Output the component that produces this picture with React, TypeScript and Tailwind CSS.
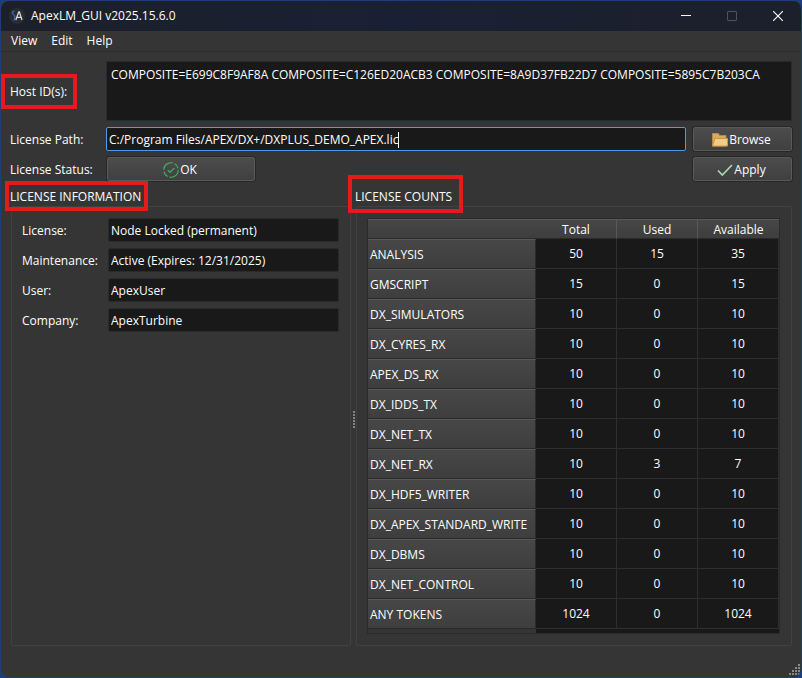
import { ReactNode } from "react";

const hostIds =
  "COMPOSITE=E699C8F9AF8A COMPOSITE=C126ED20ACB3 COMPOSITE=8A9D37FB22D7 COMPOSITE=5895C7B203CA";

const info = [
  { id: "license", label: "License:", value: "Node Locked (permanent)" },
  { id: "maintenance", label: "Maintenance:", value: "Active (Expires: 12/31/2025)" },
  { id: "user", label: "User:", value: "ApexUser" },
  { id: "company", label: "Company:", value: "ApexTurbine" },
];

const counts: [string, number, number, number][] = [
  ["ANALYSIS", 50, 15, 35],
  ["GMSCRIPT", 15, 0, 15],
  ["DX_SIMULATORS", 10, 0, 10],
  ["DX_CYRES_RX", 10, 0, 10],
  ["APEX_DS_RX", 10, 0, 10],
  ["DX_IDDS_TX", 10, 0, 10],
  ["DX_NET_TX", 10, 0, 10],
  ["DX_NET_RX", 10, 3, 7],
  ["DX_HDF5_WRITER", 10, 0, 10],
  ["DX_APEX_STANDARD_WRITE", 10, 0, 10],
  ["DX_DBMS", 10, 0, 10],
  ["DX_NET_CONTROL", 10, 0, 10],
  ["ANY TOKENS", 1024, 0, 1024],
];

function PushButton({ children, className = "" }: { children: ReactNode; className?: string }) {
  return (
    <button
      type="button"
      className={`flex h-6 items-center justify-center gap-px rounded-xs border border-[#5a5a5a] bg-linear-to-b from-[#4c4c4c] to-[#404040] pt-0.5 pr-0.5 outline outline-[#272727] ${className}`}
    >
      {children}
    </button>
  );
}

function Highlight({ className }: { className: string }) {
  return <span aria-hidden="true" className={`pointer-events-none absolute z-10 border-4 border-[#e51b1b] ${className}`} />;
}

function TitleBar() {
  return (
    <header className="flex h-[30px] items-center bg-linear-to-r from-[#1c202b] via-[#1a2033] to-[#1c202b]">
      <svg className="ml-2 size-4" viewBox="0 0 16 16" fill="none" aria-hidden="true">
        <circle cx="8" cy="8" r="8" fill="#2b2c30" />
        <path d="M5.500 3.500C3 3 2.500 5.500 4.500 6.500S6 10 5 12.500" stroke="#3a6bb0" strokeWidth="1.200" />
        <path d="M6.800 12 9.800 4h.6L13 12M8 9.300h4" stroke="#d4d8e0" strokeWidth="1.300" />
      </svg>
      <h1 className="ml-[6px] flex-1">ApexLM_GUI v2025.15.6.0</h1>
      <button type="button" aria-label="Minimize" className="grid h-full w-[46px] place-items-center">
        <svg width="10" height="10" aria-hidden="true"><path d="M0 4.500h10" stroke="#fff" /></svg>
      </button>
      <button type="button" aria-label="Maximize" disabled className="grid h-full w-[46px] place-items-center">
        <svg width="10" height="10" fill="none" aria-hidden="true"><rect x=".5" y=".5" width="9" height="9" rx=".5" stroke="#50535c" /></svg>
      </button>
      <button type="button" aria-label="Close" className="grid h-full w-[46px] place-items-center">
        <svg width="10" height="10" aria-hidden="true"><path d="m0 0 10 10M10 0 0 10" stroke="#fff" strokeWidth="1.100" /></svg>
      </button>
    </header>
  );
}

function HostForm() {
  return (
    <form className="grid grid-cols-[96px_1fr_99px] items-center gap-y-1.5">
      <label htmlFor="host" className="relative justify-self-start pt-0.5">
        Host ID(s):
        <Highlight className="-top-2 -left-[9px] h-[35px] w-[76px]" />
      </label>
      <textarea
        id="host"
        readOnly
        value={hostIds}
        className="col-span-2 block h-[60px] resize-none border border-[#2a2a2a] bg-[#191919] px-1 pt-[5px] outline-none"
      />
      <label htmlFor="path" className="pt-0.5">License Path:</label>
      <div className="mr-[7px] flex h-6 items-center rounded-xs border border-[#4a9be8] bg-[#191919] pt-0.5 pl-0.5">
        <input
          id="path"
          defaultValue="C:/Program Files/APEX/DX+/DXPLUS_DEMO_APEX.lic"
          className="field-sizing-content outline-none"
        />
        <span aria-hidden="true" className="h-4 w-px bg-white" />
      </div>
      <PushButton>
        <svg className="size-4" viewBox="0 0 16 16" aria-hidden="true">
          <path d="M.5 14V1.500h6l1 2H14V14z" fill="#d9a95c" stroke="#b98a3f" />
          <path d="M.5 14 3 6.500h12.500v7.500z" fill="#f3cb84" stroke="#c6984e" />
        </svg>
        Browse
      </PushButton>
      <span className="pt-0.5">License Status:</span>
      <PushButton className="ml-px w-[148px]">
        <svg className="size-4" viewBox="0 0 16 16" fill="none" stroke="#41b665" aria-hidden="true">
          <circle cx="8" cy="8" r="7.300" strokeWidth="1.100" strokeDasharray="13 2 6 2" />
          <path d="m4.800 8.200 2.200 2.200 4.200-4.300" strokeWidth="1.200" />
        </svg>
        OK
      </PushButton>
      <PushButton>
        <svg className="size-4" viewBox="0 0 16 16" fill="none" aria-hidden="true">
          <path d="m1 8.500 4.300 4.500L15 3" stroke="#a5dbb1" strokeWidth="1.700" />
        </svg>
        Apply
      </PushButton>
    </form>
  );
}

function Group({ title, highlight, className, children }: { title: string; highlight: string; className: string; children: ReactNode }) {
  return (
    <section className={`flex min-w-0 flex-col ${className}`}>
      <h2 className="relative self-start pt-[7px] leading-[18px]">
        {title}
        <Highlight className={highlight} />
      </h2>
      <div className="ml-px flex flex-1 flex-col rounded-xs border border-[#414141] py-[11px] pr-[11px] pl-2.5">{children}</div>
    </section>
  );
}

function CountsTable() {
  return (
    <div className="flex flex-1 flex-col border border-[#2a2a2a]">
      <table className="w-full table-fixed border-separate border-spacing-0">
        <colgroup>
          <col className="w-[168px]" />
          <col />
          <col />
          <col />
        </colgroup>
        <thead>
          <tr className="h-5">
            <td className="border-t border-b border-t-[#585858] border-b-[#2a2a2a] bg-linear-to-b from-[#474747] to-[#3e3e3e] p-0" />
            {["Total", "Used", "Available"].map((h) => (
              <th
                key={h}
                scope="col"
                className="border-t border-r border-b border-t-[#585858] border-r-[#585858] border-b-[#2a2a2a] bg-linear-to-b from-[#474747] to-[#3e3e3e] p-0 pt-0.5 font-normal last:border-r-0"
              >
                {h}
              </th>
            ))}
          </tr>
        </thead>
        <tbody>
          {counts.map(([name, ...values]) => (
            <tr key={name} className="h-[30px]">
              <th
                scope="row"
                className="border-t border-r border-b border-t-[#585858] border-r-[#2a2a2a] border-b-[#2a2a2a] bg-linear-to-b from-[#474747] to-[#3e3e3e] p-0 pt-0.5 pl-0.5 text-left font-normal"
              >
                {name}
              </th>
              {values.map((v, i) => (
                <td key={i} className="border-r border-b border-[#2e2e2e] bg-[#191919] p-0 text-center">
                  {v}
                </td>
              ))}
            </tr>
          ))}
        </tbody>
      </table>
      <div className="ml-[168px] min-h-1 flex-1 bg-[#191919]" />
    </div>
  );
}

export default function App() {
  return (
    <div className="flex min-h-screen flex-col bg-[#1c3f7c] p-px font-['Open_Sans','Segoe_UI',sans-serif] text-[12px] leading-4 text-white">
      <div className="relative flex flex-1 flex-col overflow-hidden rounded-lg bg-[#353535]">
        <TitleBar />
        <nav className="flex h-[21px] items-center gap-3.5 border-b border-[#2b2b2b] px-2.5">
          <button type="button">View</button>
          <button type="button">Edit</button>
          <button type="button">Help</button>
        </nav>
        <main className="flex flex-1 flex-col px-[9px] pt-[9px] pb-[31px]">
          <HostForm />
          <div className="flex flex-1">
            <Group title="LICENSE INFORMATION" highlight="top-0 -left-[5px] h-[30px] w-[143px]" className="flex-[341]">
              <div className="grid grid-cols-[86px_1fr] items-center gap-y-1.5">
                {info.map((f) => (
                  <div key={f.id} className="contents">
                    <label htmlFor={f.id} className="pt-0.5">{f.label}</label>
                    <input
                      id={f.id}
                      readOnly
                      value={f.value}
                      className="h-6 w-full min-w-0 rounded-xs border border-[#2a2a2a] bg-[#191919] px-0.5 pt-px outline-none"
                    />
                  </div>
                ))}
              </div>
            </Group>
            <div role="separator" aria-orientation="vertical" className="flex w-1 flex-col items-end justify-center gap-px pt-3">
              {[0, 1, 2, 3, 4, 5].map((i) => (
                <span key={i} className="size-0.5 bg-[#858585]" />
              ))}
            </div>
            <Group title="LICENSE COUNTS" highlight="-top-1.5 -left-[7px] h-[38px] w-[115px]" className="flex-[437]">
              <CountsTable />
            </Group>
          </div>
        </main>
        <svg className="absolute right-px bottom-px size-3" viewBox="0 0 12 12" fill="#8a8a8a" aria-hidden="true">
          <path d="M10 0h2v2h-2zM7 3h2v2H7zM10 3h2v2h-2zM4 6h2v2H4zM7 6h2v2H7zM10 6h2v2h-2zM1 9h2v2H1zM4 9h2v2H4zM7 9h2v2H7zM10 9h2v2h-2z" />
        </svg>
      </div>
    </div>
  );
}
